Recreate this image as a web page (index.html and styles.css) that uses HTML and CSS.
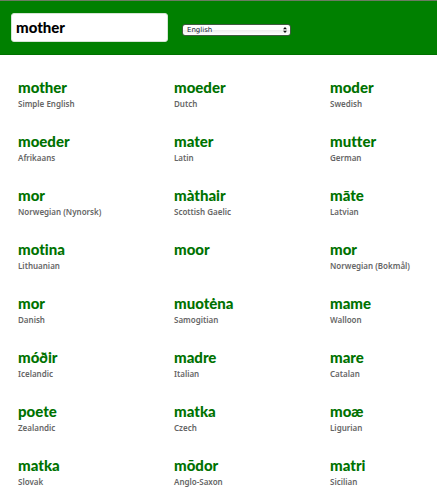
FILE: index.html
```html
<!DOCTYPE html>
<html lang="en">
<head>
<meta charset="utf-8">
<meta name="viewport" content="width=device-width, initial-scale=1">
<title>mother</title>
<link rel="stylesheet" href="styles.css">
</head>
<body>
<header class="bar">
  <form class="search">
    <input class="query" type="text" value="mother" aria-label="Word">
    <div class="picker">
      <select class="language" aria-label="Language"><option>English</option></select>
      <svg class="arrows" viewBox="0 0 4 6" aria-hidden="true"><path d="M2 0 4 2.300H0zM2 6 0 3.700H4z"/></svg>
    </div>
  </form>
</header>
<main>
  <ul class="words">
    <li><h2>mother</h2><p>Simple English</p></li>
    <li><h2>moeder</h2><p>Dutch</p></li>
    <li><h2>moder</h2><p>Swedish</p></li>
    <li><h2>moeder</h2><p>Afrikaans</p></li>
    <li><h2>mater</h2><p>Latin</p></li>
    <li><h2>mutter</h2><p>German</p></li>
    <li><h2>mor</h2><p>Norwegian (Nynorsk)</p></li>
    <li><h2>màthair</h2><p>Scottish Gaelic</p></li>
    <li><h2>māte</h2><p>Latvian</p></li>
    <li><h2>motina</h2><p>Lithuanian</p></li>
    <li><h2>moor</h2></li>
    <li><h2>mor</h2><p>Norwegian (Bokmål)</p></li>
    <li><h2>mor</h2><p>Danish</p></li>
    <li><h2>muotėna</h2><p>Samogitian</p></li>
    <li><h2>mame</h2><p>Walloon</p></li>
    <li><h2>móðir</h2><p>Icelandic</p></li>
    <li><h2>madre</h2><p>Italian</p></li>
    <li><h2>mare</h2><p>Catalan</p></li>
    <li><h2>poete</h2><p>Zealandic</p></li>
    <li><h2>matka</h2><p>Czech</p></li>
    <li><h2>moæ</h2><p>Ligurian</p></li>
    <li><h2>matka</h2><p>Slovak</p></li>
    <li><h2>mōdor</h2><p>Anglo-Saxon</p></li>
    <li><h2>matri</h2><p>Sicilian</p></li>
  </ul>
</main>
</body>
</html>
```

FILE: styles.css
```css
* {
  box-sizing: border-box;
}

body {
  margin: 0;
  background: #fff;
  font-family: "Lato", "Noto Sans", sans-serif;
}

.bar {
  padding: 12px 11px;
  background: #008000;
  border-top: 1px solid #6b7b62;
  border-bottom: 1px solid #007000;
}

.search {
  display: flex;
  align-items: center;
  gap: 14px;
}

.query {
  width: 157px;
  height: 29px;
  padding: 0 4px 2px;
  border: 1px solid #d5e5d5;
  border-radius: 3px;
  background: #fff;
  color: #000;
  font: 900 15px/20px "Lato", "Noto Sans", sans-serif;
}

.picker {
  display: flex;
  align-items: center;
  position: relative;
  top: 2px;
}

.language {
  appearance: none;
  width: 109px;
  height: 12px;
  padding: 0 12px 0 4px;
  border: 1px solid #3f5a3f;
  border-radius: 3px;
  background: linear-gradient(#fff 45%, #ececec 50%, #fff);
  color: #123;
  font: 7px/10px "DejaVu Sans", sans-serif;
}

.arrows {
  position: absolute;
  right: 4px;
  width: 4px;
  height: 6px;
  fill: #111;
}

.words {
  display: grid;
  grid-template-columns: 156fr 156fr 107fr;
  grid-auto-rows: 54px;
  margin: 0;
  padding: 22px 0 0 18px;
  list-style: none;
}

.words h2 {
  margin: 0;
  color: #007200;
  font-size: 15px;
  font-weight: 900;
  font-variant-ligatures: none;
  line-height: 20px;
}

.words p {
  margin: 0;
  color: #666;
  font-family: "Noto Sans", sans-serif;
  font-size: 8px;
  font-weight: 600;
  line-height: 13px;
  white-space: nowrap;
}
```
